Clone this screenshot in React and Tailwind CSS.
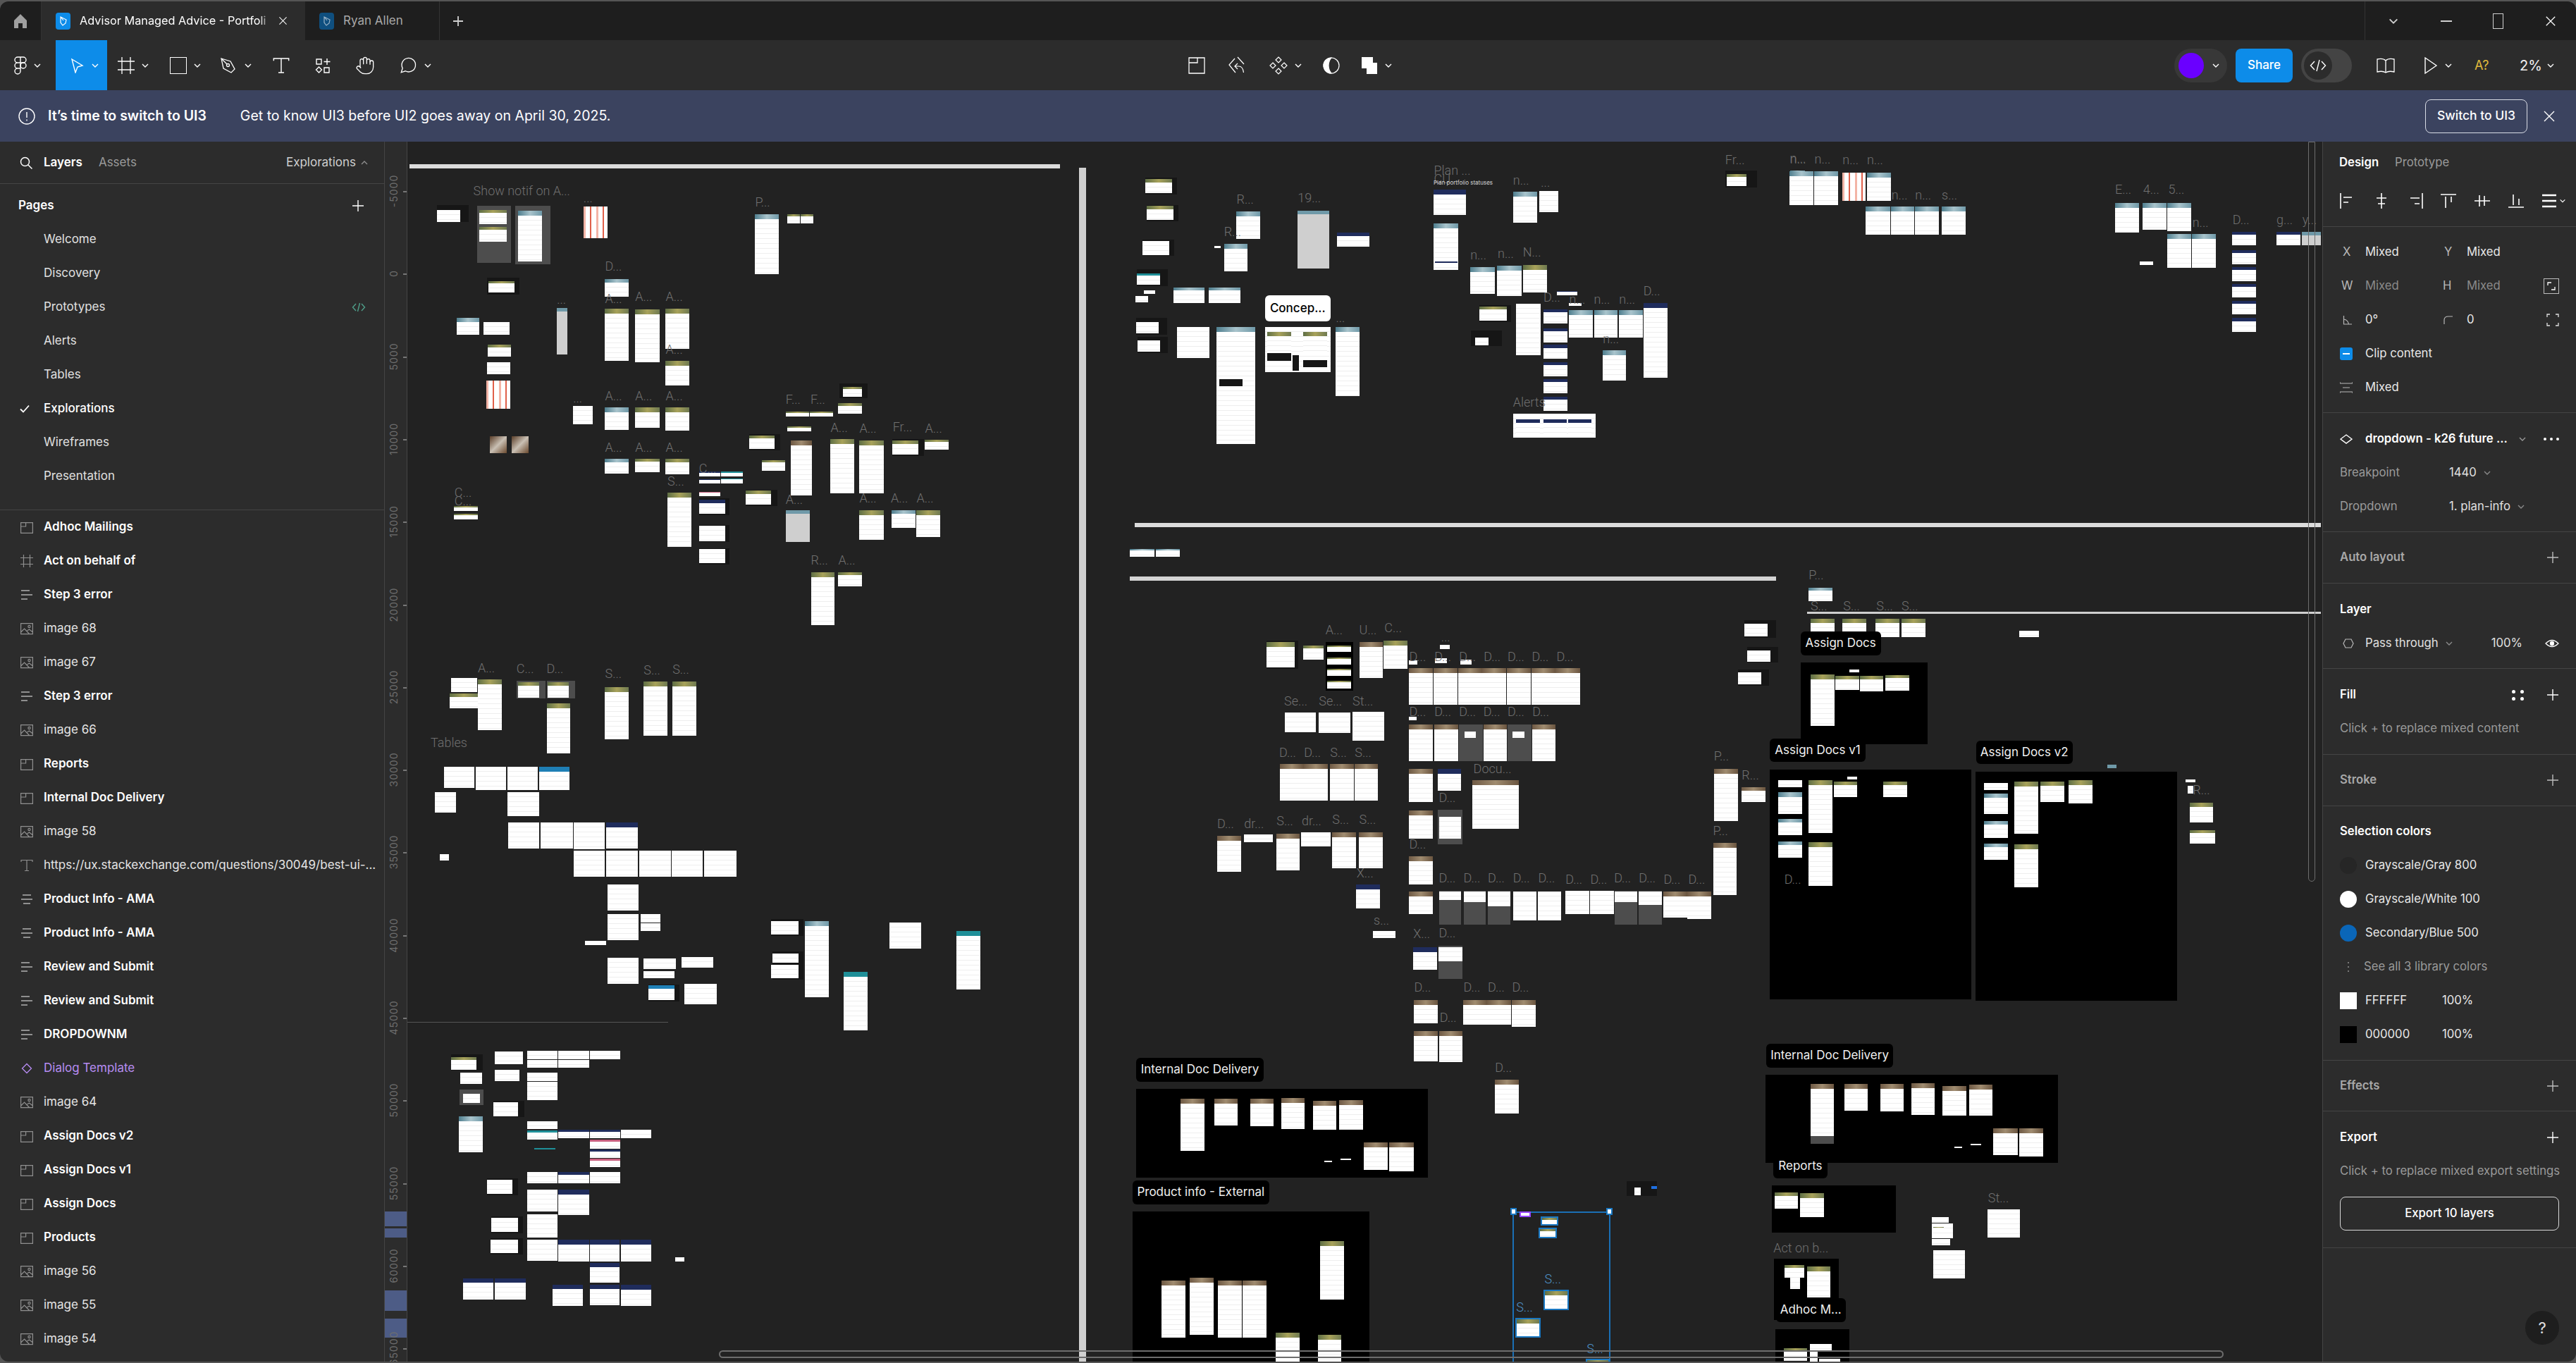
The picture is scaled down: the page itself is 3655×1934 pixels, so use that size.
import React from 'react';

// ---- small icons, 24 grid unless noted ----
const Svg = ({ size = 24, w, h, className = 'text-white', sw = 1.5, children, vb = '0 0 24 24' }) => (
  <svg width={w || size} height={h || size} viewBox={vb} fill="none" stroke="currentColor" strokeWidth={sw} className={`shrink-0 ${className}`}>
    {children}
  </svg>
);
const Chevron = ({ className = 'text-white', size = 12 }) => (
  <Svg size={size} vb="0 0 12 12" className={className} sw={1.4}><path d="M2 4l4 4 4-4" /></Svg>
);
const Plus = ({ className = 'text-white' }) => (
  <Svg size={18} vb="0 0 18 18" className={className} sw={1.4}><path d="M9 1v16M1 9h16" /></Svg>
);
const Close = ({ size = 18 }) => (
  <Svg size={size} vb="0 0 18 18" sw={1.4}><path d="M2 2l14 14M16 2L2 16" /></Svg>
);
const FigmaLogo = () => (
  <Svg w={18} h={26} vb="0 0 18 26" sw={1.4}>
    <path d="M9 1H5a4 4 0 0 0 0 8h4zM9 1h4a4 4 0 0 1 0 8H9zM9 9H5a4 4 0 0 0 0 8h4zM9 17H5a4 4 0 1 0 4 4z" />
    <circle cx="13" cy="13" r="4" />
  </Svg>
);
const Section = () => (
  <Svg size={18} vb="0 0 18 18" className="text-[#8f8f8f]" sw={1.2}><path d="M.6 2.6h16.8v14.8H.6zM.6 8h7V2.6" /></Svg>
);
const FrameIco = ({ className = 'text-[#8f8f8f]', size = 18, sw = 1.2 }) => (
  <Svg size={size} vb="0 0 18 18" className={className} sw={sw}><path d="M4.5 0v18M13.500 0v18M0 4.500h18M0 13.500h18" /></Svg>
);
const LinesL = () => (
  <Svg size={18} vb="0 0 18 18" className="text-[#8f8f8f]" sw={2}><path d="M1 3h12M1 9h16M1 15h9" /></Svg>
);
const LinesC = () => (
  <Svg size={18} vb="0 0 18 18" className="text-[#8f8f8f]" sw={2}><path d="M3 3h12M1 9h16M4 15h10" /></Svg>
);
const ImageIco = () => (
  <Svg size={18} vb="0 0 18 18" className="text-[#8f8f8f]" sw={1.2}>
    <path d="M.6 1.600h16.800v15H.6zM.6 14l5-5 7 7.500M9.500 12l3-2 5 4" /><circle cx="12.500" cy="6" r="1.600" />
  </Svg>
);
const TextIco = ({ size = 18, className = 'text-[#8f8f8f]', sw = 1.2 }) => (
  <Svg size={size} vb="0 0 18 18" className={className} sw={sw}><path d="M1 4V1.500h16V4M9 1.500v15M6 16.500h6" /></Svg>
);
const DiamondIco = ({ className = 'text-[#b78cf2]', size = 18 }) => (
  <Svg size={size} vb="0 0 18 18" className={className} sw={1.3}><path d="M9 2.500L15.500 9 9 15.500 2.500 9z" /></Svg>
);
const ICONS = { s: Section, f: FrameIco, l: LinesL, c: LinesC, i: ImageIco, t: TextIco, d: DiamondIco };

const Align = ({ d }) => (
  <Svg size={22} vb="0 0 22 22" sw={1.6}><path d={d} /></Svg>
);

// ---- sidebar data ----
const PAGES = ['Welcome', 'Discovery', 'Prototypes', 'Alerts', 'Tables', 'Explorations', 'Wireframes', 'Presentation'];
const LAYERS = [
  ['s', 'Adhoc Mailings', 1], ['f', 'Act on behalf of', 1], ['l', 'Step 3 error', 1], ['i', 'image 68'], ['i', 'image 67'],
  ['l', 'Step 3 error', 1], ['i', 'image 66'], ['s', 'Reports', 1], ['s', 'Internal Doc Delivery', 1], ['i', 'image 58'],
  ['t', 'https://ux.stackexchange.com/questions/30049/best-ui-...'], ['c', 'Product Info - AMA', 1], ['c', 'Product Info - AMA', 1],
  ['l', 'Review and Submit', 1], ['l', 'Review and Submit', 1], ['l', 'DROPDOWNM', 1], ['d', 'Dialog Template', 2], ['i', 'image 64'],
  ['s', 'Assign Docs v2', 1], ['s', 'Assign Docs v1', 1], ['s', 'Assign Docs', 1], ['s', 'Products', 1], ['i', 'image 56'], ['i', 'image 55'], ['i', 'image 54'],
];

// ---- canvas data: coordinates read off crops, converted with each crop's origin and scale ----
const CROPS = [
  {
    o: [560, 200, 1.568, 1.823],
    f: [
      ['k', 94, 165, 165, 209], ['w', 94, 178, 146, 209],
      ['D', 184, 168, 259, 316], ['g', 188, 178, 250, 215], ['g', 188, 222, 250, 260],
      ['D', 268, 168, 347, 319], ['b', 274, 180, 328, 312],
      ['x', 420, 170, 473, 252], ['b', 802, 190, 855, 344], ['g', 873, 190, 902, 213], ['g', 903, 190, 931, 213],
      ['k', 206, 354, 277, 397], ['g', 209, 362, 266, 392], ['b', 467, 357, 521, 402],
      ['g', 467, 433, 521, 569], ['g', 535, 435, 589, 573], ['g', 602, 433, 655, 537], ['g', 602, 568, 655, 632],
      ['s', 361, 432, 384, 553], ['b', 138, 458, 188, 502], ['w', 198, 468, 255, 501], ['g', 207, 527, 258, 557], ['w', 206, 572, 257, 604],
      ['x', 204, 620, 257, 692], ['w', 397, 686, 441, 733],
      ['b', 467, 690, 521, 748], ['g', 535, 690, 589, 742], ['g', 602, 690, 655, 749],
      ['b', 467, 823, 521, 861], ['g', 535, 823, 589, 856], ['g', 602, 823, 655, 862],
      ['c', 212, 763, 250, 807], ['c', 260, 763, 298, 807], ['g', 132, 945, 185, 957], ['g', 132, 965, 185, 979],
      ['g', 607, 910, 660, 1050], ['k', 677, 925, 745, 968], ['n', 677, 928, 735, 965], ['k', 677, 993, 745, 1038], ['w', 677, 996, 735, 1035], ['k', 677, 1053, 745, 1095], ['w', 677, 1056, 735, 1092],
      ['n', 677, 855, 724, 868], ['t', 726, 855, 774, 868], ['n', 677, 875, 724, 886], ['t', 726, 873, 774, 886], ['p', 677, 908, 724, 918],
      ['k', 788, 758, 858, 800], ['g', 788, 762, 845, 797], ['k', 781, 902, 852, 944], ['g', 781, 905, 838, 941], ['g', 817, 826, 869, 853],
      ['g', 873, 738, 926, 752], ['r', 881, 775, 929, 917], ['g', 870, 700, 922, 713], ['g', 924, 700, 976, 713],
      ['k', 989, 628, 1052, 665], ['g', 998, 636, 1040, 662], ['g', 987, 679, 1040, 706],
      ['g', 969, 772, 1022, 912], ['g', 1034, 775, 1088, 912], ['k', 1107, 772, 1178, 815], ['g', 1107, 775, 1165, 812], ['g', 1179, 773, 1233, 799],
      ['s', 870, 955, 923, 1038], ['g', 1034, 955, 1088, 1032], ['b', 1105, 955, 1158, 1000], ['g', 1160, 955, 1214, 1025],
      ['g', 926, 1115, 979, 1253], ['g', 987, 1115, 1040, 1153],
      ['w', 126, 1390, 184, 1425], ['g', 123, 1430, 185, 1467], ['g', 185, 1392, 238, 1524],
      ['D', 271, 1396, 335, 1442], ['g', 275, 1400, 321, 1440], ['D', 338, 1396, 401, 1442], ['g', 340, 1400, 387, 1440], ['g', 338, 1454, 391, 1584],
      ['g', 467, 1412, 521, 1548], ['g', 554, 1398, 607, 1538], ['g', 618, 1398, 671, 1538],
    ],
    l: [
      ['Show notif on A...', 175, 130], ['...', 420, 147], ['P...', 802, 158], ['D...', 468, 325], ['A...', 468, 408], ['A...', 535, 403], ['A...', 603, 402],
      ['...', 361, 410], ['A...', 603, 540], ['...', 397, 665], ['A...', 468, 660], ['A...', 535, 660], ['A...', 603, 660], ['A...', 468, 793], ['A...', 535, 793], ['A...', 603, 793],
      ['F...', 870, 669], ['F...', 925, 669], ['A...', 970, 742], ['A...', 1034, 743], ['Fr...', 1108, 741], ['A...', 1180, 743], ['C...', 133, 910], ['C...', 133, 932],
      ['S...', 607, 880], ['C...', 677, 848], ['A...', 870, 928], ['A...', 1034, 925], ['A...', 1104, 925], ['A...', 1161, 925], ['R...', 926, 1084], ['A...', 987, 1084],
      ['A...', 185, 1363], ['C...', 271, 1366], ['D...', 338, 1366], ['S...', 468, 1379], ['S...', 554, 1369], ['S...', 618, 1368], ['Tables', 80, 1556],
    ],
  },
  {
    o: [1560, 200, 1.568, 2.24],
    f: [
      ['k', 102, 117, 172, 170], ['g', 102, 122, 162, 166], ['k', 105, 203, 175, 255], ['g', 105, 207, 165, 252], ['k', 96, 313, 166, 365], ['w', 96, 317, 156, 362],
      ['k', 83, 408, 152, 462], ['t', 83, 420, 135, 458], ['w', 98, 474, 124, 486], ['w', 80, 492, 108, 512],
      ['b', 165, 465, 234, 515], ['b', 243, 465, 313, 515],
      ['k', 81, 563, 150, 615], ['w', 81, 575, 132, 612], ['k', 84, 622, 152, 674], ['w', 84, 634, 135, 670], ['w', 172, 592, 245, 691], ['b', 261, 592, 347, 963], ['k', 266, 757, 319, 780],
      ['w', 368, 592, 514, 734], ['g', 373, 607, 426, 670], ['g', 453, 607, 506, 670], ['k', 373, 674, 426, 698], ['k', 453, 696, 506, 718], ['k', 430, 682, 444, 730],
      ['b', 526, 592, 579, 811],
      ['b', 304, 225, 357, 312], ['b', 277, 328, 330, 415], ['s', 440, 222, 511, 405], ['n', 528, 292, 600, 337], ['w', 255, 334, 270, 340],
      ['n', 744, 155, 815, 236], ['b', 744, 263, 798, 411], ['n', 746, 382, 796, 410],
      ['b', 920, 162, 973, 259], ['w', 979, 160, 1021, 227], ['b', 825, 400, 879, 487], ['b', 885, 397, 939, 493], ['g', 942, 395, 996, 481],
      ['k', 845, 522, 915, 576], ['g', 845, 526, 906, 572], ['k', 826, 603, 895, 652], ['w', 835, 625, 866, 650],
      ['w', 926, 518, 982, 682], ['n', 988, 535, 1041, 581], ['n', 988, 595, 1041, 640], ['n', 988, 648, 1041, 693], ['n', 988, 703, 1041, 748], ['n', 988, 757, 1041, 802], ['n', 988, 812, 1041, 857],
      ['n', 1018, 477, 1063, 490], ['w', 1044, 515, 1073, 525], ['b', 1044, 538, 1098, 626], ['b', 1100, 538, 1153, 626], ['b', 1156, 538, 1209, 626], ['b', 1119, 665, 1172, 762], ['n', 1210, 516, 1264, 752],
      ['w', 920, 867, 1104, 942], ['n', 926, 885, 980, 935], ['n', 988, 885, 1040, 935], ['n', 1042, 885, 1095, 935],
      ['k', 1392, 95, 1463, 147], ['g', 1395, 105, 1440, 143], ['b', 1536, 95, 1570, 203],
      ['b', 68, 1296, 122, 1322], ['b', 125, 1296, 179, 1322],
    ],
    l: [
      ['R...', 305, 187], ['R...', 277, 290], ['19...', 441, 182], ['...', 526, 563], ['Plan ...', 744, 93], ['CU', 744, 122], ['n...', 920, 125], ['...', 982, 133],
      ['n...', 825, 363], ['n...', 886, 358], ['N...', 942, 354], ['D...', 988, 497], ['n...', 1045, 503], ['n...', 1100, 503], ['n...', 1156, 503], ['D...', 1210, 478], ['n...', 1120, 630],
      ['Alerts', 920, 831], ['Fr...', 1392, 60], ['n...', 1536, 55],
    ],
    t: [['Concep...', 368, 491, 514, 573, 1]],
  },
  {
    o: [2500, 200, 1.96, 1.254],
    f: [
      ['b', 77, 54, 144, 114], ['b', 146, 54, 212, 114], ['x', 223, 56, 289, 107], ['b', 292, 56, 358, 107], ['b', 289, 117, 356, 167], ['b', 358, 117, 424, 167], ['b', 425, 117, 492, 167], ['b', 499, 117, 566, 167],
      ['b', 982, 110, 1049, 163], ['b', 1058, 110, 1126, 158], ['b', 1127, 110, 1194, 160], ['b', 1127, 166, 1194, 226], ['b', 1196, 166, 1262, 226], ['w', 1050, 215, 1088, 221],
      ['n', 1307, 162, 1374, 186], ['n', 1307, 194, 1374, 219], ['n', 1307, 224, 1374, 249], ['n', 1307, 254, 1374, 279], ['n', 1307, 285, 1374, 309], ['n', 1307, 315, 1374, 340],
      ['n', 1431, 162, 1497, 186], ['s', 1502, 162, 1555, 186],
      ['b', 129, 795, 196, 819], ['g', 135, 850, 202, 883], ['g', 223, 850, 290, 883], ['g', 316, 850, 382, 883], ['g', 388, 850, 455, 883], ['w', 716, 872, 771, 883],
      ['S', 107, 928, 460, 1074], ['g', 135, 949, 201, 1041], ['g', 204, 952, 270, 977], ['g', 272, 952, 338, 980], ['g', 343, 950, 410, 978], ['w', 243, 940, 270, 946],
      ['S', 22, 1119, 582, 1527], ['w', 45, 1138, 112, 1150], ['b', 45, 1159, 112, 1197], ['b', 45, 1206, 112, 1235], ['b', 45, 1246, 112, 1275], ['g', 129, 1137, 196, 1232], ['g', 199, 1140, 265, 1168], ['g', 337, 1140, 404, 1168], ['g', 129, 1248, 196, 1325], ['w', 238, 1131, 265, 1136],
      ['S', 594, 1122, 1155, 1530], ['w', 617, 1143, 684, 1155], ['b', 617, 1161, 684, 1198], ['b', 617, 1210, 684, 1240], ['b', 617, 1250, 684, 1279], ['g', 702, 1140, 768, 1233], ['g', 774, 1140, 841, 1176], ['g', 853, 1137, 919, 1179], ['g', 702, 1252, 768, 1328],
      ['s', 960, 1110, 985, 1116], ['w', 1177, 1136, 1205, 1141], ['w', 1183, 1147, 1200, 1161], ['g', 1189, 1178, 1255, 1212], ['g', 1189, 1226, 1260, 1250],
    ],
    l: [
      ['n...', 78, 32], ['n...', 146, 32], ['n...', 224, 34], ['n...', 292, 34], ['n...', 360, 96], ['n...', 426, 96], ['s...', 500, 96],
      ['E...', 982, 87], ['4...', 1060, 87], ['5...', 1130, 87], ['n...', 1197, 145], ['D...', 1309, 140], ['g...', 1431, 141], ['y...', 1503, 141],
      ['P...', 130, 772], ['S...', 135, 828], ['S...', 226, 828], ['S...', 318, 828], ['S...', 388, 828], ['D...', 62, 1314], ['R...', 1198, 1155],
    ],
    t: [['Assign Docs', 107, 873, 331, 915], ['Assign Docs v1', 22, 1063, 288, 1105], ['Assign Docs v2', 595, 1067, 864, 1109]],
  },
  {
    o: [560, 1000, 1.568, 1.679],
    f: [
      ['w', 109, 148, 177, 198], ['w', 180, 148, 248, 203], ['w', 251, 148, 319, 203], ['u', 321, 148, 389, 204], ['w', 89, 209, 137, 257], ['w', 251, 208, 321, 266],
      ['w', 252, 280, 322, 342], ['w', 325, 280, 396, 342], ['w', 398, 280, 468, 344], ['n', 471, 280, 541, 342], ['w', 398, 348, 468, 409], ['w', 471, 348, 541, 409], ['w', 544, 348, 614, 409], ['w', 616, 348, 686, 409], ['w', 689, 348, 760, 409],
      ['w', 100, 356, 120, 371], ['w', 473, 428, 543, 490], ['w', 473, 499, 543, 561], ['w', 548, 499, 591, 518], ['w', 548, 520, 591, 539], ['w', 423, 562, 470, 572], ['w', 473, 603, 543, 665], ['w', 554, 604, 625, 629], ['w', 554, 634, 622, 651], ['w', 638, 601, 709, 627],
      ['k', 564, 666, 634, 707], ['u', 564, 669, 622, 703], ['w', 645, 665, 716, 714],
      ['k', 837, 511, 909, 551], ['w', 837, 515, 899, 548], ['b', 913, 515, 966, 697], ['k', 840, 588, 910, 655], ['w', 840, 592, 898, 615], ['w', 837, 619, 899, 652], ['w', 1101, 519, 1171, 581], ['t', 999, 636, 1052, 775], ['t', 1249, 539, 1303, 679],
      ['k', 125, 832, 196, 872], ['g', 125, 840, 182, 870], ['w', 146, 877, 194, 903], ['D', 144, 917, 198, 953], ['w', 152, 927, 190, 948],
      ['k', 219, 943, 288, 982], ['w', 219, 947, 275, 980], ['b', 142, 980, 196, 1067], ['w', 222, 826, 285, 856], ['w', 222, 870, 278, 897],
      ['w', 295, 825, 363, 845], ['w', 364, 825, 432, 845], ['w', 434, 825, 502, 845], ['w', 295, 847, 363, 865], ['w', 364, 847, 432, 865], ['w', 295, 877, 362, 897], ['w', 295, 899, 362, 942],
      ['w', 295, 992, 362, 1011], ['t', 295, 1014, 362, 1036], ['n', 364, 1013, 432, 1033], ['n', 434, 1013, 502, 1033], ['w', 503, 1013, 571, 1033], ['p', 434, 1036, 502, 1057], ['n', 434, 1060, 502, 1079], ['p', 434, 1082, 502, 1102], ['T', 310, 1056, 357, 1059],
      ['w', 294, 1114, 362, 1140], ['n', 364, 1114, 432, 1140], ['w', 434, 1114, 502, 1140], ['w', 294, 1155, 362, 1207], ['n', 364, 1155, 432, 1216], ['w', 294, 1214, 362, 1269], ['w', 294, 1275, 362, 1325], ['n', 364, 1275, 432, 1327], ['n', 434, 1275, 500, 1327], ['n', 503, 1275, 571, 1327], ['n', 434, 1329, 500, 1377],
      ['n', 351, 1381, 419, 1432], ['n', 434, 1381, 500, 1430], ['n', 503, 1382, 571, 1433], ['n', 152, 1366, 220, 1417], ['n', 223, 1366, 292, 1417],
      ['k', 205, 1128, 275, 1168], ['w', 205, 1132, 262, 1165], ['k', 215, 1219, 285, 1259], ['w', 215, 1223, 275, 1256], ['k', 213, 1271, 285, 1310], ['w', 213, 1275, 275, 1307], ['w', 624, 1316, 645, 1326],
    ],
    l: [],
  },
  {
    o: [1560, 850, 1.568, 1.446],
    f: [
      ['k', 372, 85, 442, 143], ['g', 372, 88, 434, 140], ['g', 453, 95, 498, 125], ['S', 504, 88, 564, 188], ['g', 506, 95, 560, 108], ['g', 506, 120, 560, 135], ['g', 506, 143, 560, 158], ['g', 506, 168, 560, 183],
      ['r', 578, 88, 631, 162], ['g', 632, 85, 686, 143],
      ['r', 689, 142, 742, 217], ['r', 744, 142, 797, 217], ['r', 798, 142, 851, 217], ['r', 852, 142, 905, 217], ['r', 907, 142, 960, 217], ['r', 961, 142, 1014, 217], ['r', 1015, 142, 1069, 217],
      ['w', 689, 126, 707, 134], ['w', 746, 122, 773, 131], ['w', 803, 125, 828, 134], ['w', 758, 94, 780, 103],
      ['r', 689, 257, 742, 332], ['r', 745, 257, 798, 332], ['D', 799, 257, 853, 332], ['w', 813, 272, 838, 285], ['r', 854, 257, 907, 332], ['D', 908, 257, 961, 332], ['w', 919, 272, 946, 285], ['r', 962, 257, 1015, 332], ['w', 689, 242, 706, 249],
      ['w', 412, 233, 482, 273], ['w', 487, 233, 558, 275], ['w', 563, 232, 633, 290],
      ['r', 401, 338, 454, 414], ['r', 455, 338, 508, 414], ['r', 513, 338, 566, 414], ['r', 567, 338, 620, 414],
      ['r', 262, 486, 315, 560], ['w', 321, 483, 386, 499], ['r', 393, 482, 446, 556], ['w', 449, 479, 514, 508], ['r', 518, 478, 571, 553], ['r', 577, 478, 631, 553],
      ['n', 571, 585, 624, 635], ['w', 608, 681, 658, 695],
      ['r', 689, 348, 742, 417], ['n', 752, 348, 805, 393], ['r', 689, 434, 742, 491], ['D', 753, 432, 808, 503], ['w', 756, 447, 805, 492], ['r', 830, 372, 933, 471],
      ['r', 689, 528, 742, 585], ['r', 689, 600, 742, 646],
      ['D', 755, 598, 805, 668], ['w', 755, 600, 805, 617], ['D', 810, 598, 860, 668], ['w', 810, 600, 860, 622], ['D', 864, 598, 914, 668], ['w', 864, 600, 914, 630], ['w', 920, 600, 972, 660], ['w', 976, 600, 1027, 660],
      ['w', 1036, 598, 1089, 646], ['w', 1091, 598, 1144, 646], ['D', 1146, 598, 1197, 668], ['w', 1146, 600, 1197, 622], ['D', 1200, 598, 1251, 668], ['w', 1200, 600, 1251, 628], ['r', 1254, 600, 1307, 653], ['r', 1308, 600, 1361, 656],
      ['r', 1365, 500, 1417, 608], ['r', 1367, 349, 1420, 455], ['r', 1428, 386, 1482, 417],
      ['n', 698, 714, 751, 760], ['D', 754, 712, 807, 780], ['w', 754, 714, 807, 743],
      ['r', 700, 823, 753, 871], ['r', 809, 823, 862, 873], ['r', 863, 823, 916, 873], ['r', 917, 823, 970, 878], ['r', 700, 886, 753, 948], ['r', 755, 886, 808, 950], ['r', 880, 986, 933, 1055],
      ['S', 81, 1005, 731, 1187], ['r', 180, 1025, 234, 1132], ['r', 255, 1025, 308, 1080], ['r', 336, 1025, 388, 1081], ['r', 404, 1024, 457, 1088], ['r', 475, 1030, 527, 1089], ['r', 533, 1028, 586, 1089], ['r', 588, 1115, 641, 1171], ['r', 645, 1115, 699, 1174], ['w', 500, 1152, 517, 1155], ['w', 536, 1148, 560, 1151],
      ['S', 73, 1257, 600, 1640], ['r', 138, 1398, 191, 1516], ['r', 201, 1392, 254, 1510], ['r', 263, 1398, 317, 1516], ['r', 318, 1398, 371, 1516], ['g', 491, 1318, 544, 1437], ['g', 392, 1506, 445, 1640], ['g', 486, 1510, 538, 1640],
      ['k', 1173, 1195, 1240, 1225], ['w', 1190, 1207, 1205, 1224], ['v', 1228, 1205, 1240, 1211],
      ['k', 1435, 44, 1505, 80], ['w', 1435, 50, 1486, 76], ['k', 1441, 98, 1510, 130], ['w', 1441, 105, 1492, 128], ['k', 1420, 144, 1490, 178], ['w', 1420, 150, 1472, 175],
      ['B', 919, 1257, 1137, 1640], ['P', 935, 1256, 960, 1268], ['e', 982, 1267, 1021, 1285], ['e', 977, 1290, 1017, 1312], ['e', 988, 1417, 1044, 1459], ['e', 925, 1475, 981, 1515], ['e', 1082, 1559, 1136, 1640],
      ['H', 914, 1250, 928, 1264], ['H', 1128, 1250, 1142, 1264],
    ],
    l: [
      ['A...', 503, 63], ['U...', 578, 63], ['C...', 634, 60], ['...', 760, 78],
      ['D...', 689, 118], ['D...', 745, 118], ['D...', 800, 118], ['D...', 855, 118], ['D...', 908, 118], ['D...', 962, 118], ['D...', 1017, 118],
      ['D...', 689, 232], ['D...', 745, 232], ['D...', 800, 232], ['D...', 854, 232], ['D...', 908, 232], ['D...', 963, 232],
      ['Se...', 411, 210], ['Se...', 488, 210], ['St...', 563, 210], ['D...', 400, 315], ['D...', 455, 315], ['S...', 513, 315], ['S...', 568, 315],
      ['D...', 262, 461], ['dr...', 322, 461], ['S...', 394, 456], ['dr...', 450, 456], ['S...', 518, 453], ['S...', 578, 453], ['X...', 572, 562], ['s...', 610, 660],
      ['Docu...', 832, 349], ['D...', 755, 408], ['D...', 689, 503],
      ['D...', 755, 572], ['D...', 810, 572], ['D...', 864, 572], ['D...', 920, 572], ['D...', 976, 572], ['D...', 1037, 575], ['D...', 1092, 575], ['D...', 1145, 572], ['D...', 1200, 572], ['D...', 1255, 575], ['D...', 1310, 575],
      ['P...', 1367, 322], ['P...', 1365, 476], ['R...', 1429, 361], ['X...', 698, 687], ['D...', 755, 685], ['D...', 700, 797], ['D...', 810, 797], ['D...', 864, 797], ['D...', 918, 797], ['D...', 757, 859], ['D...', 880, 961],
      ['S...', 990, 1396, 1], ['S...', 927, 1453, 1], ['S...', 1084, 1539, 1],
    ],
    t: [['Internal Doc Delivery', 82, 942, 365, 990], ['Product info - External', 73, 1193, 378, 1242]],
  },
  {
    o: [2480, 1450, 1.96, 3],
    f: [
      ['S', 49, 225, 862, 601], ['r', 174, 265, 240, 487], ['D', 174, 487, 240, 518], ['r', 268, 265, 333, 379], ['r', 368, 265, 433, 380], ['r', 454, 262, 519, 397], ['r', 541, 272, 608, 400], ['r', 615, 268, 681, 400], ['r', 683, 452, 750, 568], ['r', 755, 452, 821, 574], ['w', 574, 531, 595, 536], ['w', 619, 520, 648, 526],
      ['S', 67, 696, 412, 897], ['g', 74, 727, 140, 795], ['g', 146, 730, 212, 831],
      ['S', 72, 1008, 252, 1270], ['g', 101, 1036, 157, 1090], ['w', 118, 1090, 146, 1137], ['g', 165, 1041, 230, 1172],
      ['S', 76, 1308, 282, 1452], ['g', 99, 1388, 165, 1442], ['w', 172, 1372, 234, 1400], ['w', 172, 1400, 195, 1452], ['w', 197, 1435, 256, 1452],
      ['w', 512, 832, 559, 855], ['w', 512, 858, 570, 920], ['g', 516, 872, 544, 884], ['w', 512, 924, 562, 950], ['w', 515, 972, 604, 1092], ['w', 667, 797, 756, 917],
    ],
    l: [['Act on b...', 71, 964], ['St...', 668, 750]],
    t: [['Internal Doc Delivery', 51, 92, 404, 195], ['Reports', 70, 563, 222, 666], ['Adhoc M...', 78, 1175, 272, 1278]],
  },
];

const LINES = 'bg-[repeating-linear-gradient(180deg,#ffffff_0px,#ffffff_6px,#eeeeee_6px,#eeeeee_7px)]';
const HEADERS = {
  g: 'bg-gradient-to-r from-[#5f6f45] via-[#a8a25a] to-[#6f7a50]',
  b: 'bg-gradient-to-r from-[#4f7f8f] via-[#a9c4cc] to-[#6f99a8]',
  r: 'bg-gradient-to-r from-[#6f5a45] via-[#a08c70] to-[#6a5540]',
  n: 'bg-[#1f2c5c]',
  u: 'bg-[#1f7fb5]',
  t: 'bg-[#1f8f98]',
  p: 'bg-[#c8607f]',
};

const Thumb = ({ k, h }) => {
  if (k === 'w') return <div className={`h-full ${LINES}`} />;
  if (k === 'k') return <div className="h-full bg-[#161616]" />;
  if (k === 'S') return <div className="h-full bg-black" />;
  if (k === 'D') return <div className="h-full bg-[#4d4d4d]" />;
  if (k === 'T') return <div className="h-full bg-[#1f8f98]" />;
  if (k === 'P') return <div className="h-full bg-white border-2 border-[#9747ff]" />;
  if (k === 'v') return <div className="h-full bg-[#1f6fe0]" />;
  if (k === 'H') return <div className="h-full bg-white border-2 border-[#1a78c2]" />;
  if (k === 'B') return <div className="h-full border-2 border-[#1a6fb5]" />;
  if (k === 'c') return <div className="h-full bg-gradient-to-br from-[#5a3f2a] via-[#c9c0b4] to-[#6a4a2f]" />;
  if (k === 's') {
    return (
      <div className="flex flex-col h-full bg-white">
        <div className="h-[5px] shrink-0 bg-[#6f99a8]" />
        <div className="flex-1 bg-[#cfcfcf]" />
      </div>
    );
  }
  if (k === 'x') return <div className="h-full bg-[repeating-linear-gradient(90deg,#f3b4a6_0px,#f3b4a6_3px,#ffffff_3px,#ffffff_9px,#e0604a_9px,#e0604a_11px,#ffffff_11px,#ffffff_18px)]" />;
  const head = k === 'e' ? HEADERS.g : HEADERS[k];
  return (
    <div className={`flex flex-col h-full bg-white ${k === 'e' ? 'border-2 border-[#1a78c2]' : ''}`}>
      <div className={`shrink-0 ${head}`} style={{ height: Math.min(7, h * 0.22) }} />
      <div className={`flex-1 ${LINES}`} />
    </div>
  );
};

// canvas origin in page coords
const CX = 578;
const CY = 201;

const Canvas = () => (
  <div className="relative flex-1 bg-[#222222] overflow-hidden">
    {/* section divider bars */}
    <div className="absolute left-[3px] top-[32px] w-[923px] h-[6px] bg-[#dcdcdc]" />
    <div className="absolute left-[953px] top-[37px] w-[10px] h-[1720px] bg-[#d0d0d0]" />
    <div className="absolute left-[1032px] top-[541px] w-[1683px] h-[6px] bg-[#dcdcdc]" />
    <div className="absolute left-[1025px] top-[617px] w-[917px] h-[6px] bg-[#d4d4d4]" />
    <div className="absolute left-[1986px] top-[667px] w-[729px] h-[3px] bg-[#cfcfcf]" />
    <div className="absolute left-0 top-[1249px] w-[370px] h-px bg-[#555555]" />

    {CROPS.map((c, i) => {
      const [ox, oy, sx, sy] = c.o;
      return (
        <React.Fragment key={i}>
          {c.f.map(([k, x1, y1, x2, y2], j) => (
            <div
              key={j}
              className="absolute overflow-hidden"
              style={{ left: ox + x1 / sx - CX, top: oy + y1 / sy - CY, width: (x2 - x1) / sx, height: (y2 - y1) / sy }}
            >
              <Thumb k={k} h={(y2 - y1) / sy} />
            </div>
          ))}
          {c.l.map(([text, x, y, sel], j) => (
            <span
              key={j}
              className={`absolute -translate-y-1/2 whitespace-nowrap font-[Roboto,sans-serif] text-[18px] leading-none font-light ${sel ? 'text-[#4f93c9]' : 'text-[#707070]'}`}
              style={{ left: ox + x / sx - CX, top: oy + y / sy - CY }}
            >
              {text}
            </span>
          ))}
          {(c.t || []).map(([text, x1, y1, x2, y2, light], j) => (
            <div
              key={j}
              className={`absolute flex items-center justify-center rounded-[6px] text-[17px] whitespace-nowrap ${light ? 'bg-white text-black font-medium' : 'bg-black text-[#f0f0f0]'}`}
              style={{ left: ox + x1 / sx - CX, top: oy + y1 / sy - CY, width: (x2 - x1) / sx, height: (y2 - y1) / sy }}
            >
              {text}
            </div>
          ))}
        </React.Fragment>
      );
    })}

    {/* tiny text inside the Plan frame */}
    <span className="absolute left-[1456px] top-[54px] text-[8px] leading-none text-[#d8d8d8] whitespace-nowrap">Plan portfolio statuses</span>

    {/* scroll bars */}
    <div className="absolute left-[2697px] top-0 w-[10px] h-[1050px] rounded-b-[5px] border border-[#6d6d6d]" />
    <div className="absolute left-[442px] top-[1715px] w-[2135px] h-[11px] rounded-[6px] border-2 border-[#6d6d6d]" />
  </div>
);

const Ruler = () => (
  <div className="relative w-[33px] shrink-0 bg-[#2c2c2c] border-x border-[#444444] overflow-hidden">
    <div className="absolute left-0 top-[1518px] w-full h-[21px] bg-[#4d5c86]" />
    <div className="absolute left-0 top-[1542px] w-full h-[13px] bg-[#4d5c86]" />
    <div className="absolute left-0 top-[1630px] w-full h-[29px] bg-[#4d5c86]" />
    <div className="absolute left-0 top-[1670px] w-full h-[27px] bg-[#4d5c86]" />
    {Array.from({ length: 15 }).map((_, i) => (
      <React.Fragment key={i}>
        <span
          className="absolute left-[13px] -translate-x-1/2 -translate-y-1/2 -rotate-90 text-[14px] leading-none text-[#6e6e6e] whitespace-nowrap tracking-[1px]"
          style={{ top: 70 + 117.3 * i }}
        >
          {(i - 1) * 5000}
        </span>
        <div className="absolute left-[26px] w-[6px] h-[2px] bg-[#777777]" style={{ top: 70 + 117.3 * i }} />
      </React.Fragment>
    ))}
  </div>
);

const Sidebar = () => (
  <aside className="w-[545px] shrink-0 bg-[#2c2c2c] overflow-hidden text-[17px]">
    <div className="flex items-center h-[60px] border-b border-[#444444] pl-[27px] pr-[22px]">
      <Svg size={20} vb="0 0 20 20" sw={1.5}><circle cx="8.500" cy="8.500" r="6" /><path d="M13 13l5.500 5.500" /></Svg>
      <span className="ml-[15px] font-semibold text-white">Layers</span>
      <span className="ml-[23px] text-[#9a9a9a]">Assets</span>
      <span className="ml-auto text-[#cfcfcf]">Explorations</span>
      <Svg size={12} vb="0 0 12 12" className="ml-[6px] text-[#8f8f8f]" sw={1.3}><path d="M2 8l4-4 4 4" /></Svg>
    </div>
    <div className="flex items-center h-[48px] mt-[7px] pl-[26px] pr-[28px]">
      <span className="font-semibold text-white">Pages</span>
      <span className="ml-auto"><Plus /></span>
    </div>
    <div className="border-b border-[#444444] pb-[23px]">
      {PAGES.map((p) => (
        <div key={p} className="relative flex items-center h-[48px] pl-[62px] pr-[26px]">
          {p === 'Explorations' && (
            <Svg size={16} vb="0 0 16 16" className="absolute left-[27px] text-white" sw={1.8}><path d="M2 8.500l4 4 8-9" /></Svg>
          )}
          <span className={p === 'Explorations' ? 'font-medium text-white' : 'text-[#e0e0e0]'}>{p}</span>
          {p === 'Prototypes' && (
            <Svg w={20} h={16} vb="0 0 20 16" className="ml-auto text-[#4f9f8a]" sw={1.4}><path d="M6 3L1.500 8 6 13M14 3l4.500 5-4.500 5M11.500 2l-3 12" /></Svg>
          )}
        </div>
      ))}
    </div>
    {LAYERS.map(([ico, name, weight], i) => {
      const Ico = ICONS[ico];
      return (
        <div key={i} className="flex items-center h-[48px] pl-[29px] pr-[22px] whitespace-nowrap">
          <Ico />
          <span className={`ml-[15px] ${weight === 1 ? 'font-semibold text-white' : weight === 2 ? 'text-[#b78cf2]' : 'text-[#e4e4e4]'}`}>{name}</span>
        </div>
      );
    })}
  </aside>
);

const Row = ({ children, className = '' }) => (
  <div className={`flex items-center h-[48px] whitespace-nowrap ${className}`}>{children}</div>
);
const Sec = ({ children, className = '' }) => (
  <div className={`border-b border-[#444444] pl-[24px] pr-[24px] ${className}`}>{children}</div>
);
const Swatch = ({ className, name, round }) => (
  <Row>
    <span className={`w-[24px] h-[24px] shrink-0 ${round ? 'rounded-full' : ''} ${className}`} />
    <span className="ml-[12px] text-[#e8e8e8]">{name}</span>
  </Row>
);

const RightPanel = () => (
  <aside className="w-[360px] shrink-0 bg-[#2c2c2c] border-l border-[#444444] text-[16.700px] relative">
    <div className="flex items-center h-[60px] pl-[23px] gap-[23px]">
      <span className="font-semibold text-white">Design</span>
      <span className="text-[#9a9a9a]">Prototype</span>
    </div>
    <Sec className="pb-[12px] !pl-[24px] !pr-[14px]">
      <Row className="justify-between">
        <Align d="M1 0v22M5 6h12M5 13h7" />
        <Align d="M11 0v22M4 7h14M6 15h10" />
        <Align d="M21 0v22M4 7h13M10 15h7" />
        <Align d="M0 2h22M7 5v16M15 5v8" />
        <Align d="M0 11h22M7 3v16M14 4v14" />
        <Align d="M0 20h22M7 2v15M15 8v9" />
        <div className="flex items-center gap-[4px]">
          <Svg w={20} h={22} vb="0 0 20 22" sw={2.4}><path d="M0 3h20M0 11h20M0 19h20" /></Svg>
          <Chevron size={10} />
        </div>
      </Row>
    </Sec>
    <Sec className="pt-[12px] pb-[11px]">
      <Row>
        <span className="w-[36px] pl-[4px] text-[#b8b8b8]">X</span><span className="w-[108px] text-[#e8e8e8]">Mixed</span>
        <span className="w-[36px] pl-[4px] text-[#b8b8b8]">Y</span><span className="text-[#e8e8e8]">Mixed</span>
      </Row>
      <Row>
        <span className="w-[36px] pl-[2px] text-[#b8b8b8]">W</span><span className="w-[108px] text-[#8a8a8a]">Mixed</span>
        <span className="w-[36px] pl-[2px] text-[#b8b8b8]">H</span><span className="text-[#8a8a8a]">Mixed</span>
        <span className="ml-auto flex items-center justify-center w-[22px] h-[22px] border border-[#bdbdbd]">
          <Svg size={12} vb="0 0 12 12" sw={1.3}><path d="M1 5V1h5M11 7v4H6" /></Svg>
        </span>
      </Row>
      <Row>
        <span className="w-[36px] pl-[4px]"><Svg size={14} vb="0 0 14 14" className="text-[#b8b8b8]" sw={1.2}><path d="M1.500 1v12H13M1.500 6q6 1 7 7" /></Svg></span>
        <span className="w-[108px] text-[#e8e8e8]">0°</span>
        <span className="w-[36px] pl-[3px]"><Svg size={14} vb="0 0 14 14" className="text-[#b8b8b8]" sw={1.2}><path d="M1 13V7q0-5 6-5h6" /></Svg></span>
        <span className="text-[#e8e8e8]">0</span>
        <span className="ml-auto">
          <Svg size={18} vb="0 0 18 18" sw={1.3} className="text-[#e0e0e0]"><path d="M1 5V1h4M13 1h4v4M17 13v4h-4M5 17H1v-4" /></Svg>
        </span>
      </Row>
      <Row>
        <span className="flex items-center justify-center w-[18px] h-[18px] rounded-[3px] bg-[#0d8ce9] mr-[18px]"><span className="w-[10px] h-[2px] bg-white" /></span>
        <span className="text-[#e8e8e8]">Clip content</span>
      </Row>
      <Row>
        <span className="w-[36px]"><Svg size={18} vb="0 0 18 18" className="text-[#b8b8b8]" sw={1.2}><path d="M0 1v2h18V1M4 9h10M0 17v-2h18v2" /></Svg></span>
        <span className="text-[#e8e8e8]">Mixed</span>
      </Row>
    </Sec>
    <Sec className="pt-[13px] pb-[11px]">
      <Row>
        <span className="w-[36px]"><Svg size={18} vb="0 0 18 18" sw={1.4}><path d="M9 3l8 6-8 6-8-6z" /></Svg></span>
        <span className="font-semibold text-white w-[217px]">dropdown - k26 future ...</span>
        <Chevron className="text-[#9a9a9a]" />
        <div className="flex gap-[5px] ml-auto">
          <span className="w-[4px] h-[4px] rounded-full bg-white" /><span className="w-[4px] h-[4px] rounded-full bg-white" /><span className="w-[4px] h-[4px] rounded-full bg-white" />
        </div>
      </Row>
      <Row>
        <span className="w-[155px] text-[#9a9a9a]">Breakpoint</span><span className="text-[#e0e0e0]">1440</span>
        <Chevron className="ml-[9px] text-[#8a8a8a]" />
      </Row>
      <Row>
        <span className="w-[155px] text-[#9a9a9a]">Dropdown</span><span className="text-[#e0e0e0]">1. plan-info</span>
        <Chevron className="ml-[9px] text-[#8a8a8a]" />
      </Row>
    </Sec>
    <Sec className="flex items-center justify-between h-[73px]">
      <span className="font-semibold text-[#a8a8a8]">Auto layout</span><Plus className="text-[#bdbdbd]" />
    </Sec>
    <Sec className="pt-[13px] pb-[11px]">
      <Row><span className="font-semibold text-white">Layer</span></Row>
      <Row>
        <span className="w-[36px] pl-[4px]"><Svg size={16} vb="0 0 16 16" className="text-[#b8b8b8]" sw={1.2}><path d="M4 2h8l3 6-3 6H4L1 8z" /></Svg></span>
        <span className="text-[#e0e0e0]">Pass through</span>
        <Chevron className="ml-[9px] text-[#8a8a8a]" />
        <span className="ml-auto text-[#e0e0e0]">100%</span>
        <span className="ml-[32px]"><Svg w={20} h={14} vb="0 0 20 14" sw={1.3}><path d="M1 7q9-9 18 0-9 9-18 0z" /><circle cx="10" cy="7" r="2.500" fill="currentColor" /></Svg></span>
      </Row>
    </Sec>
    <Sec className="pt-[13px] pb-[12px]">
      <Row>
        <span className="font-semibold text-white">Fill</span>
        <div className="ml-auto grid grid-cols-2 gap-x-[7px] gap-y-[5px] mr-[32px]">
          <span className="w-[5px] h-[5px] rounded-full bg-white" /><span className="w-[5px] h-[5px] rounded-full bg-white" /><span className="w-[5px] h-[5px] rounded-full bg-white" /><span className="w-[5px] h-[5px] rounded-full bg-white" />
        </div>
        <Plus />
      </Row>
      <Row><span className="text-[#9a9a9a]">Click + to replace mixed content</span></Row>
    </Sec>
    <Sec className="flex items-center justify-between h-[73px]">
      <span className="font-semibold text-[#a8a8a8]">Stroke</span><Plus className="text-[#bdbdbd]" />
    </Sec>
    <Sec className="pt-[12px] pb-[12px]">
      <Row><span className="font-semibold text-white">Selection colors</span></Row>
      <Swatch round name="Grayscale/Gray 800" className="bg-[#262626]" />
      <Swatch round name="Grayscale/White 100" className="bg-white" />
      <Swatch round name="Secondary/Blue 500" className="bg-[#0a66b8]" />
      <Row>
        <span className="w-[24px] flex justify-center">
          <Svg w={4} h={16} vb="0 0 4 16" className="text-[#777777]" sw={2}><path d="M2 1v2M2 7v2M2 13v2" /></Svg>
        </span>
        <span className="ml-[10px] text-[#9a9a9a]">See all 3 library colors</span>
      </Row>
      <Row>
        <span className="w-[24px] h-[24px] bg-white" /><span className="w-[109px] ml-[12px] text-[#e8e8e8]">FFFFFF</span><span className="text-[#e8e8e8]">100%</span>
      </Row>
      <Row>
        <span className="w-[24px] h-[24px] bg-black" /><span className="w-[109px] ml-[12px] text-[#e8e8e8]">000000</span><span className="text-[#e8e8e8]">100%</span>
      </Row>
    </Sec>
    <Sec className="flex items-center justify-between h-[72px]">
      <span className="font-semibold text-[#a8a8a8]">Effects</span><Plus className="text-[#bdbdbd]" />
    </Sec>
    <Sec className="pt-[13px] pb-[24px]">
      <Row className="justify-between"><span className="font-semibold text-white">Export</span><Plus /></Row>
      <Row><span className="text-[#9a9a9a]">Click + to replace mixed export settings</span></Row>
      <div className="flex items-center justify-center h-[48px] mt-[12px] rounded-[8px] border border-[#d8d8d8] font-medium text-white">
        Export 10 layers
      </div>
    </Sec>
    <div className="absolute right-[24px] bottom-[24px] flex items-center justify-center w-[48px] h-[48px] rounded-full bg-[#1e1e1e] text-[22px] text-[#e0e0e0]">?</div>
  </aside>
);

const Tool = ({ w, active, children }) => (
  <div className={`flex items-center justify-center gap-[9px] h-full shrink-0 ${active ? 'bg-[#0d8ce9] pl-[8px]' : ''}`} style={{ width: w }}>
    {children}
  </div>
);

const Toolbar = () => (
  <div className="flex items-center h-[71px] shrink-0 bg-[#2c2c2c]">
    <Tool w={79}><FigmaLogo /><Chevron /></Tool>
    <Tool w={73} active>
      <Svg size={22} vb="0 0 22 22" sw={1.4}><path d="M4 2l15 9-7 2-3 8z" /></Svg><Chevron />
    </Tool>
    <Tool w={75}>
      <FrameIco className="text-white" size={24} sw={1} /><Chevron />
    </Tool>
    <Tool w={72}><span className="w-[24px] h-[24px] border-[1.5px] border-white" /><Chevron /></Tool>
    <Tool w={71}>
      <Svg size={26} vb="0 0 26 26" sw={1.3}><path d="M3 3l13 4 6 11-5 5-11-6zM3 3l8 8" /><circle cx="12.500" cy="12.500" r="2" /></Svg><Chevron />
    </Tool>
    <Tool w={58}><TextIco size={24} className="text-white" sw={1.1} /></Tool>
    <Tool w={60}>
      <Svg size={24} vb="0 0 24 24" sw={1.4}><path d="M3 3h7v7H3zM18 2v9M13.500 6.500h9M6.500 14l4 4-4 4-4-4zM14 15h7v7h-7z" /></Svg>
    </Tool>
    <Tool w={60}>
      <Svg size={28} vb="0 0 24 24" sw={1.1}><path d="M18 11V6a2 2 0 0 0-4 0M14 10V4a2 2 0 0 0-4 0v2M10 10.500V6a2 2 0 0 0-4 0v8" /><path d="M18 8a2 2 0 1 1 4 0v6a8 8 0 0 1-8 8h-2c-2.800 0-4.500-.860-5.990-2.340l-3.600-3.600a2 2 0 0 1 2.830-2.820L7 15" /></Svg>
    </Tool>
    <Tool w={82}>
      <Svg size={26} vb="0 0 24 24" sw={1.2}><path d="M3 21l1.800-5.500A9 9 0 1 1 8.500 19.200z" /></Svg><Chevron />
    </Tool>

    <div className="w-[1040px] shrink-0" />
    <Tool w={56}><Svg size={24} vb="0 0 24 24" sw={1.3}><path d="M1 1h22v22H1zM1 8h12V1" /></Svg></Tool>
    <Tool w={60}>
      <Svg size={26} vb="0 0 26 26" sw={1.2}><path d="M13 1l9 10M10 23l-9-11 8-9M13 10l-4 4 4 4M9.500 14h5q6 0 7 9" /></Svg>
    </Tool>
    <Tool w={76}>
      <Svg size={26} vb="0 0 26 26" sw={1.2}><path d="M13 1l4 4-4 4-4-4zM5 9l4 4-4 4-4-4zM21 9l4 4-4 4-4-4zM13 17l4 4-4 4-4-4z" /></Svg><Chevron />
    </Tool>
    <Tool w={54}>
      <Svg size={24} vb="0 0 24 24" sw={1.2}><circle cx="12" cy="12" r="11" /><path d="M12 1a11 11 0 0 0 0 22q-4-5-4-11t4-11z" fill="currentColor" /></Svg>
    </Tool>
    <Tool w={74}>
      <Svg size={24} vb="0 0 24 24" sw={0}><path d="M1 0h16v8h6v16H8v-8H1z" fill="currentColor" /></Svg><Chevron />
    </Tool>

    <div className="w-[1095px] shrink-0" />
    <div className="flex items-center h-full">
      <div className="flex items-center h-[48px] w-[75px] rounded-full bg-[#383838]">
        <span className="w-[36px] h-[36px] ml-[6px] rounded-full bg-[#6a00ff]" />
        <Chevron className="ml-[11px] text-white" />
      </div>
      <div className="flex items-center justify-center h-[48px] w-[81px] ml-[12px] rounded-[8px] bg-[#0d8ce9] text-[17px] font-medium text-white">Share</div>
      <div className="flex items-center h-[48px] w-[72px] ml-[12px] rounded-full bg-[#444444]">
        <span className="flex items-center justify-center w-[40px] h-[40px] ml-[4px] rounded-full bg-[#2c2c2c]">
          <Svg w={24} h={18} vb="0 0 24 18" sw={1.4}><path d="M7 3L1.500 9 7 15M17 3l5.500 6-5.500 6M14 1l-4 16" /></Svg>
        </span>
      </div>
      <div className="w-[34px]" />
      <Svg w={28} h={24} vb="0 0 28 24" sw={1.3}><path d="M14 5c-3-3-8-3-12-2v18c4-1 9-1 12 1 3-2 8-2 12-1V3c-4-1-9-1-12 2zM14 5v17" /></Svg>
      <div className="w-[40px]" />
      <Svg w={20} h={26} vb="0 0 20 26" sw={1.4}><path d="M2 2l16 11L2 24z" /></Svg>
      <Chevron className="ml-[9px] text-white" />
      <span className="ml-[31px] w-[24px] text-[18px] text-[#e0b93c]">A?</span>
      <span className="ml-[40px] w-[30px] text-[20px] text-[#f0f0f0]">2%</span>
      <Chevron className="ml-[8px] text-white" />
    </div>
  </div>
);

const TabBar = () => (
  <div className="flex items-stretch h-[55px] shrink-0 bg-[#1e1e1e] text-[17px]">
    <div className="flex items-center justify-center w-[59px] shrink-0 border-r border-[#333333]">
      <Svg size={22} vb="0 0 22 22" sw={0} className="text-[#a0a0a0]"><path d="M11 1l9 9v11h-6v-7H8v7H2V10z" fill="currentColor" /></Svg>
    </div>
    <div className="flex items-center w-[374px] shrink-0 pl-[20px] bg-[#2c2c2c] text-white">
      <span className="flex items-center justify-center w-[21px] h-[24px] rounded-[4px] bg-[#0d8ce9]">
        <Svg size={14} vb="0 0 14 14" sw={1.2}><path d="M3 1l8 4-1 5-4 3-3-4zM3 1l4 5" /></Svg>
      </span>
      <span className="ml-[13px] w-[272px] text-[16.300px] whitespace-nowrap [mask-image:linear-gradient(90deg,#000_94%,transparent)]">Advisor Managed Advice - Portfoli</span>
      <span className="ml-[10px]"><Close size={13} /></span>
    </div>
    <div className="flex items-center w-[191px] shrink-0 pl-[20px] border-r border-[#333333] text-[#a8a8a8]">
      <span className="flex items-center justify-center w-[21px] h-[24px] rounded-[4px] bg-[#0f4f7f]">
        <Svg size={14} vb="0 0 14 14" className="text-[#9ab4c8]" sw={1.2}><path d="M3 1l8 4-1 5-4 3-3-4zM3 1l4 5" /></Svg>
      </span>
      <span className="ml-[13px]">Ryan Allen</span>
    </div>
    <div className="flex items-center pl-[18px] text-[#d0d0d0]">
      <Svg size={16} vb="0 0 16 16" sw={1.8} className="text-[#d0d0d0]"><path d="M8 1v14M1 8h14" /></Svg>
    </div>
    <div className="flex items-center ml-auto w-[300px] border-l border-[#333333] pl-[32px] pr-[28px] justify-between">
      <Chevron size={16} className="text-[#cfcfcf]" />
      <span className="w-[16px] h-[2px] bg-[#d0d0d0]" />
      <span className="w-[15px] h-[22px] border-[1.5px] border-[#d0d0d0]" />
      <Close size={16} />
    </div>
  </div>
);

const Banner = () => (
  <div className="flex items-center h-[73px] shrink-0 bg-[#3b435f] pl-[26px] pr-[29px] text-[19.500px] text-white">
    <Svg size={24} vb="0 0 24 24" sw={1.4}><circle cx="12" cy="12" r="11" /><path d="M12 6v8M12 16.500v2" /></Svg>
    <span className="ml-[18px] font-semibold">It’s time to switch to UI3</span>
    <span className="ml-[48px]">Get to know UI3 before UI2 goes away on April 30, 2025.</span>
    <div className="flex items-center justify-center ml-auto w-[145px] h-[48px] rounded-[8px] border border-[#d8dbe5] text-[17.500px] font-medium">Switch to UI3</div>
    <span className="ml-[22px]"><Close /></span>
  </div>
);

const App = () => (
  <div className="w-[3655px] h-[1934px] overflow-hidden bg-[#555555] font-[Inter,sans-serif] pt-[2px] pb-[2px]">
    <div className="flex flex-col h-full overflow-hidden rounded-[12px]">
      <TabBar />
      <Toolbar />
      <Banner />
      <div className="flex flex-1 min-h-0">
        <Sidebar />
        <Ruler />
        <Canvas />
        <RightPanel />
      </div>
    </div>
  </div>
);

export default App;
